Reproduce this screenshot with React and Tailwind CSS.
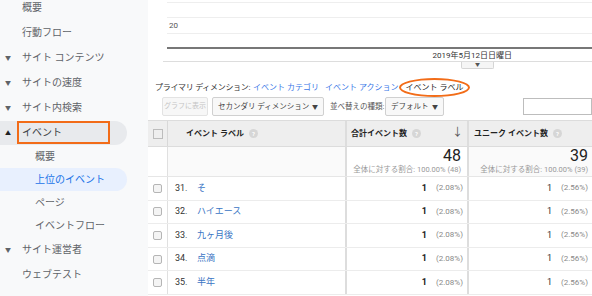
import React from "react";

const jp = { fontFamily: '"Roboto", "Noto Sans CJK JP", sans-serif' };

const navTop = [
  { label: "概要", indent: true },
  { label: "行動フロー", indent: true },
  { label: "サイト コンテンツ", caret: "▼" },
  { label: "サイトの速度", caret: "▼" },
  { label: "サイト内検索", caret: "▼" },
];

const navSub = [
  { label: "概要" },
  { label: "上位のイベント", active: true },
  { label: "ページ" },
  { label: "イベントフロー" },
];

const rows = [
  { n: "31.", label: "そ" },
  { n: "32.", label: "ハイエース" },
  { n: "33.", label: "九ヶ月後" },
  { n: "34.", label: "点滴" },
  { n: "35.", label: "半年" },
];

const Help = () => (
  <span className="ml-[5px] inline-flex h-[9px] w-[9px] items-center justify-center rounded-full bg-[#d6d6d6] text-[6px] font-bold text-white">
    ?
  </span>
);

const Check = () => (
  <span className="block h-[9px] w-[9px] rounded-[2px] border border-[#b5b5b5] bg-[#f4f4f4]" />
);

const Sidebar = () => (
  <div className="w-[148px] shrink-0 bg-[#f8f9fa] text-[10px] text-[#5f6368]">
    <div className="-mt-[5px]">
      {navTop.map((item) => (
        <div key={item.label} className="flex h-[25px] items-center">
          <span className="w-[22px] pl-[5px] text-[6px] text-[#5f6368]">{item.caret}</span>
          <span>{item.label}</span>
        </div>
      ))}
      <div className="flex h-[25px] items-center">
        <div className="flex h-[24px] w-[127px] items-center rounded-r-full bg-[#e8eaed]">
          <span className="w-[17px] pl-[5px] text-[6px] text-[#202124]">▲</span>
          <span className="flex h-[23px] w-[93px] items-center border-2 border-[#f26c18] pl-[3px] text-[#3c4043]">
            イベント
          </span>
        </div>
      </div>
      {navSub.map((item) => (
        <div key={item.label} className="flex h-[23px] items-center">
          <div
            className={`flex h-[23px] w-[127px] items-center rounded-r-full pl-[35px] ${
              item.active ? "bg-[#e8f0fe] text-[#1a73e8]" : ""
            }`}
          >
            {item.label}
          </div>
        </div>
      ))}
      <div className="flex h-[25px] items-center">
        <span className="w-[22px] pl-[5px] text-[6px]">▼</span>
        <span>サイト運営者</span>
      </div>
      <div className="flex h-[24px] items-center pl-[22px]">ウェブテスト</div>
    </div>
  </div>
);

const Chart = () => (
  <div className="relative h-[67px]">
    <div className="ml-[19px] flex flex-col">
      <div className="mt-[2px] h-px bg-[#eeeeee]" />
      <div className="mt-[14px] h-px bg-[#eeeeee]" />
      <div className="h-[15px] pl-[2px] text-[8px] leading-[15px] text-[#555]">20</div>
      <div className="h-px bg-[#eeeeee]" />
      <div className="mt-[13px] h-[2px] bg-[#777]" />
      <div className="flex h-[12px] justify-end pr-[80px] text-[8px] leading-[13px] text-[#333]">
        2019年5月12日日曜日
      </div>
    </div>
    <div className="ml-[15px] h-px bg-[#dddddd]" />
    <div className="ml-[313px] flex h-[7px] w-[33px] items-start justify-center rounded-b-[2px] border border-t-0 border-[#d5d5d5] bg-[#f5f5f5] text-[5px] leading-[5px] text-[#555]">
      ▼
    </div>
  </div>
);

const Toolbar = () => (
  <div className="flex h-[21px] items-center whitespace-nowrap pl-[14px] text-[7.5px]">
    <span className="flex h-[19px] w-[46px] items-center justify-center overflow-hidden rounded-[2px] border border-[#e3e3e3] bg-[#f7f7f7] text-[7px] text-[#c4c4c4]">
      グラフに表示
    </span>
    <span className="ml-[4px] flex h-[19px] w-[112px] items-center justify-between rounded-[2px] border border-[#d0d0d0] bg-[#f8f8f8] px-[5px] text-[#444]">
      セカンダリ ディメンション <span className="text-[6px]">▼</span>
    </span>
    <span className="ml-[6px] w-[55px] text-[#555]">並べ替えの種類:</span>
    <span className="flex h-[19px] w-[59px] items-center justify-between rounded-[2px] border border-[#d0d0d0] bg-[#f8f8f8] px-[5px] text-[#444]">
      デフォルト <span className="text-[6px]">▼</span>
    </span>
    <span className="ml-auto h-[17px] w-[69px] border border-[#bdbdbd] bg-white" />
  </div>
);

const Table = () => (
  <div className="mt-[3px] whitespace-nowrap text-[8px]">
    <div className="flex h-[27px] border-y border-[#dcdcdc] bg-[#eeeeee] font-bold text-[#222]">
      <div className="flex w-[20px] items-center justify-center border-r border-[#d8d8d8]">
        <span className="block h-[10px] w-[10px] border border-[#bcbcbc] bg-[#eeeeee]" />
      </div>
      <div className="flex w-[179px] items-center border-r-2 border-[#dddddd] pl-[18px]">
        イベント ラベル <Help />
      </div>
      <div className="flex w-[122px] items-center border-r-2 border-[#dddddd] pl-[4px] pr-[4px]">
        合計イベント数 <Help />
        <span className="ml-auto text-[11px] font-normal text-[#555]">↓</span>
      </div>
      <div className="flex flex-1 items-center pl-[5px]">
        ユニーク イベント数 <Help />
      </div>
    </div>
    <div className="flex h-[30px] border-b border-[#e6e6e6]">
      <div className="w-[20px] border-r border-[#e0e0e0]" />
      <div className="w-[179px] border-r-2 border-[#dddddd] bg-[#fafafa]" />
      <div className="flex w-[122px] flex-col items-end justify-end border-r-2 border-[#dddddd] pb-[1px] pr-[6px]">
        <span className="text-[16px] leading-[16px] text-[#222]">48</span>
        <span className="text-[7.5px] leading-[11px] text-[#999]">全体に対する割合: 100.00% (48)</span>
      </div>
      <div className="flex flex-1 flex-col items-end justify-end bg-[#fafafa] pb-[1px] pr-[4px]">
        <span className="text-[16px] leading-[16px] text-[#222]">39</span>
        <span className="text-[7.5px] leading-[11px] text-[#999]">全体に対する割合: 100.00% (39)</span>
      </div>
    </div>
    {rows.map((r) => (
      <div key={r.n} className="flex h-[23.6px] border-b border-[#ececec]">
        <div className="flex w-[20px] items-center justify-center border-r border-[#e0e0e0]">
          <Check />
        </div>
        <div className="flex w-[179px] items-center border-r-2 border-[#dddddd] pl-[7px] text-[9px]">
          <span className="w-[22px] text-[#333]">{r.n}</span>
          <span className="text-[#3a75c4]">{r.label}</span>
        </div>
        <div className="flex w-[122px] items-center justify-end gap-[9px] border-r-2 border-[#dddddd] pr-[4px]">
          <span className="text-[9px] font-bold text-[#222]">1</span>
          <span className="text-[#888]">(2.08%)</span>
        </div>
        <div className="flex flex-1 items-center justify-end gap-[9px] pr-[4px]">
          <span className="text-[9px] text-[#333]">1</span>
          <span className="text-[#888]">(2.56%)</span>
        </div>
      </div>
    ))}
  </div>
);

export default function App() {
  return (
    <div className="flex h-[296px] w-[592px] overflow-hidden bg-white" style={jp}>
      <Sidebar />
      <div className="min-w-0 flex-1">
        <Chart />
        <div className="flex h-[29px] items-center whitespace-nowrap pl-[7px] pt-[12px] text-[8px]">
          <span className="w-[98px] tracking-[-0.3px] text-[#333]">プライマリ ディメンション:</span>
          <span className="w-[72px] text-[#3b78e7]">イベント カテゴリ</span>
          <span className="w-[74px] text-[#3b78e7]">イベント アクション</span>
          <span className="flex h-[19px] w-[71px] items-center justify-center rounded-[50%] border-2 border-[#f26c18] text-[#222]">
            イベント ラベル
          </span>
        </div>
        <Toolbar />
        <Table />
      </div>
    </div>
  );
}
